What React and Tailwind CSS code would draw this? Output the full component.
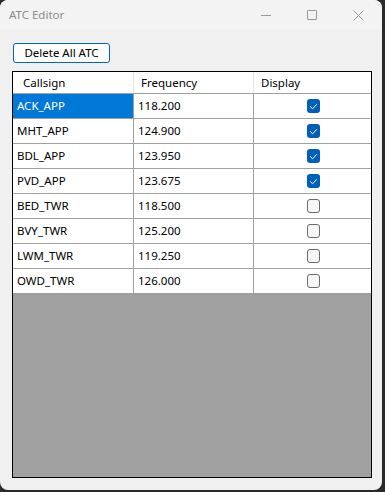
import React from 'react'

const rows = [
  { callsign: 'ACK_APP', freq: '118.200', display: true },
  { callsign: 'MHT_APP', freq: '124.900', display: true },
  { callsign: 'BDL_APP', freq: '123.950', display: true },
  { callsign: 'PVD_APP', freq: '123.675', display: true },
  { callsign: 'BED_TWR', freq: '118.500', display: false },
  { callsign: 'BVY_TWR', freq: '125.200', display: false },
  { callsign: 'LWM_TWR', freq: '119.250', display: false },
  { callsign: 'OWD_TWR', freq: '126.000', display: false },
]

const Check = ({ on }) =>
  on ? (
    <div className="w-[13px] h-[14px] rounded-[3px] bg-[#005fb8] flex items-center justify-center">
      <svg width="9" height="9" viewBox="0 0 9 9" fill="none">
        <path d="M1.5 4.8 L3.6 6.8 L7.5 2.6" stroke="#ffffff" strokeWidth="1" strokeLinecap="round" strokeLinejoin="round" />
      </svg>
    </div>
  ) : (
    <div className="w-[13px] h-[14px] rounded-[3px] border border-[#6b6b6b] bg-[#f6f6f6]" />
  )

export default function App() {
  return (
    <div className="w-[385px] h-[492px] bg-[#2a2a2a] font-['Noto_Sans','Open_Sans',sans-serif] text-[11.5px]">
      <div className="w-[382px] h-[490px] bg-[#f0f0f0] rounded-[8px] flex flex-col overflow-hidden">
        {/* title bar */}
        <div className="h-[30px] bg-[#f3f3f3] flex items-center pl-[9px] shrink-0">
          <span className="text-[#8c8c8c] text-[11.5px] leading-none">ATC Editor</span>
          <div className="ml-auto flex items-center h-full">
            <div className="w-[46px] h-full flex items-center justify-center">
              <div className="w-[10px] h-px bg-[#999]" />
            </div>
            <div className="w-[46px] h-full flex items-center justify-center">
              <div className="w-[10px] h-[10px] border border-[#999] rounded-[1px]" />
            </div>
            <div className="w-[46px] h-full flex items-center justify-center mr-[1px]">
              <svg width="11" height="11" viewBox="0 0 11 11">
                <path d="M0.5 0.5 L10.5 10.5 M10.5 0.5 L0.5 10.5" stroke="#999" strokeWidth="1" />
              </svg>
            </div>
          </div>
        </div>

        <div className="flex-1 flex flex-col pl-[12px] pr-[10px] pt-[13px] pb-[12px]">
          <button className="ml-[1px] w-[97px] h-[20px] border border-[#0067c0] rounded-[3px] bg-[#fdfdfd] text-[11.5px] text-black leading-none">
            Delete All ATC
          </button>

          <div className="mt-[8px] flex-1 border border-black bg-[#a0a0a0] flex flex-col">
            <div className="flex h-[22px] bg-white text-black border-b border-[#a0a0a0]">
              <div className="w-[121px] pl-[10px] flex items-center border-r border-[#e5e5e5]">Callsign</div>
              <div className="w-[120px] pl-[7px] flex items-center border-r border-[#e5e5e5]">Frequency</div>
              <div className="flex-1 pl-[7px] flex items-center">Display</div>
            </div>
            {rows.map((r, i) => (
              <div key={r.callsign} className="flex h-[25px] bg-white text-black border-b border-[#a0a0a0]">
                <div
                  className={
                    i === 0
                      ? 'w-[121px] pl-[4px] flex items-center border-r border-[#a0a0a0] bg-[#0078d7] text-white'
                      : 'w-[121px] pl-[4px] flex items-center border-r border-[#a0a0a0]'
                  }
                >
                  {r.callsign}
                </div>
                <div className="w-[120px] pl-[4px] flex items-center border-r border-[#a0a0a0]">{r.freq}</div>
                <div className="flex-1 flex items-center justify-center pl-[1px]">
                  <Check on={r.display} />
                </div>
              </div>
            ))}
          </div>
        </div>
      </div>
    </div>
  )
}
